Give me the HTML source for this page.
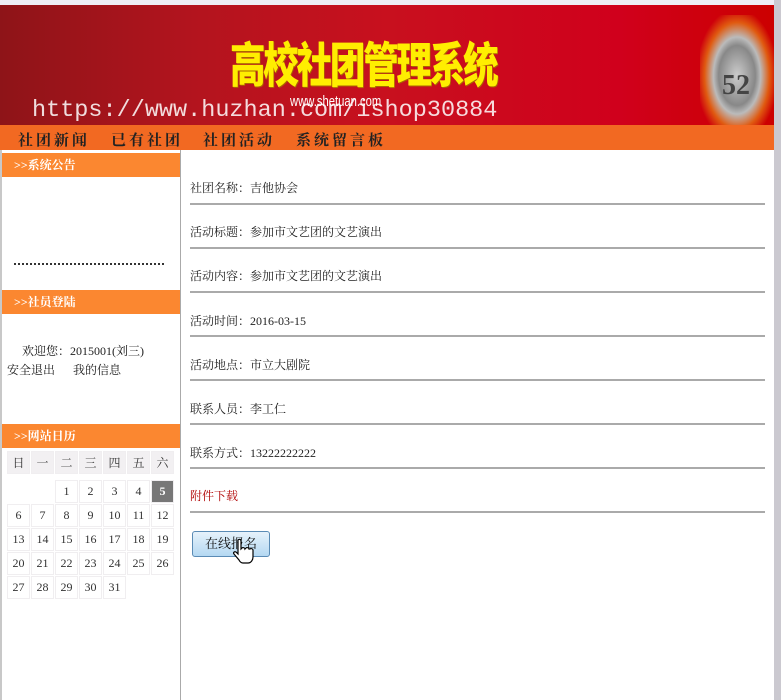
<!DOCTYPE html>
<html><head><meta charset="utf-8"><style>
*{margin:0;padding:0;box-sizing:border-box}
body{width:781px;height:700px;overflow:hidden;background:#fff;font-family:"Liberation Serif","Noto Serif CJK SC","Noto Sans CJK SC",serif;font-size:12px;color:#222;position:relative}
.abs{position:absolute}
.banner{left:0;top:5px;width:774px;height:120px;background:linear-gradient(90deg,#8e1418 0%,#b3141e 25%,#c8101e 50%,#d0001c 80%,#c00 100%)}
.title{left:230px;top:26px;font-family:"Noto Sans CJK SC",sans-serif;font-weight:900;font-size:48px;color:#ffee00;letter-spacing:-3px;transform:scaleX(0.74);transform-origin:left;text-shadow:1px 1px 0 #aa6600;white-space:nowrap}
.wm{left:32px;top:97px;font-family:"Liberation Mono",monospace;font-size:23.5px;color:#fff;opacity:.85;white-space:nowrap}
.nav{left:0;top:125px;width:774px;height:25px;background:#f26922}
.nav span{position:absolute;top:4px;font-family:"Noto Serif CJK SC",serif;font-weight:bold;font-size:15px;color:#222;letter-spacing:3px}
.rstrip{left:774px;top:0;width:7px;height:700px;background:#cbc9d0}
.lh{left:2px;width:178px;height:24px;background:#fb8730;color:#fff;font-weight:bold;font-size:12px;padding:3px 0 0 12px}
.cal td{width:23px;height:23px;text-align:center;font-size:12px;color:#333;border:1px solid #f0eef0}
.row{left:190px;width:575px;font-size:12px}
.line{left:190px;width:575px;height:2px;background:#aaa}
</style></head><body>
<div class="abs" style="left:0;top:0;width:781px;height:5px;background:#eeeef5"></div>
<div class="abs banner"></div>
<div class="abs" style="left:700px;top:15px;width:74px;height:110px;background:radial-gradient(ellipse at 50% 55%,#ccc 0%,#888 35%,#bbb 45%,#e05a10 62%,rgba(200,0,20,0) 78%)"></div>
<div class="abs" style="left:722px;top:70px;font-size:28px;font-weight:bold;color:#444">52</div>
<div class="abs title">高校社团管理系统</div>
<div class="abs" style="left:290px;top:93px;font-family:'Liberation Sans',sans-serif;font-size:15px;color:#fff;transform:scaleX(.75);transform-origin:left">www.shetuan.com</div>
<div class="abs wm">https://www.huzhan.com/ishop30884</div>
<div class="abs nav"><span style="left:18px">社团新闻</span><span style="left:111px">已有社团</span><span style="left:203px">社团活动</span><span style="left:296px">系统留言板</span></div>
<div class="abs rstrip"></div>
<div class="abs" style="left:0;top:150px;width:2px;height:550px;background:#c8c8c8"></div>
<div class="abs" style="left:180px;top:150px;width:1px;height:550px;background:#aaa"></div>
<div class="abs lh" style="top:153px">&gt;&gt;系统公告</div>
<div class="abs" style="left:14px;top:263px;width:150px;height:3px;border-top:2px dotted #333"></div>
<div class="abs lh" style="top:290px">&gt;&gt;社员登陆</div>
<div class="abs" style="left:22px;top:342px;font-size:12px">欢迎您：2015001(刘三)</div>
<div class="abs" style="left:7px;top:361px;font-size:12px">安全退出&nbsp;&nbsp;&nbsp;&nbsp;&nbsp;&nbsp;我的信息</div>
<div class="abs lh" style="top:424px">&gt;&gt;网站日历</div>
<table class="abs cal" style="left:6px;top:450px;border-collapse:separate;border-spacing:1px">
<tr style="background:#f2f0f2"><td>日</td><td>一</td><td>二</td><td>三</td><td>四</td><td>五</td><td>六</td></tr>
<tr><td style="border:0;height:4px" colspan="7"></td></tr>
<tr><td style="border:0"></td><td style="border:0"></td><td>1</td><td>2</td><td>3</td><td>4</td><td style="background:#777;color:#fff;font-weight:bold">5</td></tr>
<tr><td>6</td><td>7</td><td>8</td><td>9</td><td>10</td><td>11</td><td>12</td></tr>
<tr><td>13</td><td>14</td><td>15</td><td>16</td><td>17</td><td>18</td><td>19</td></tr>
<tr><td>20</td><td>21</td><td>22</td><td>23</td><td>24</td><td>25</td><td>26</td></tr>
<tr><td>27</td><td>28</td><td>29</td><td>30</td><td>31</td><td style="border:0"></td><td style="border:0"></td></tr>
</table>
<div class="abs row" style="top:179px">社团名称：吉他协会</div><div class="abs line" style="top:203px"></div>
<div class="abs row" style="top:223px">活动标题：参加市文艺团的文艺演出</div><div class="abs line" style="top:247px"></div>
<div class="abs row" style="top:267px">活动内容：参加市文艺团的文艺演出</div><div class="abs line" style="top:291px"></div>
<div class="abs row" style="top:312px">活动时间：2016-03-15</div><div class="abs line" style="top:335px"></div>
<div class="abs row" style="top:356px">活动地点：市立大剧院</div><div class="abs line" style="top:379px"></div>
<div class="abs row" style="top:400px">联系人员：李工仁</div><div class="abs line" style="top:423px"></div>
<div class="abs row" style="top:444px">联系方式：13222222222</div><div class="abs line" style="top:467px"></div>
<div class="abs row" style="top:487px;color:#b00000">附件下载</div><div class="abs line" style="top:511px"></div>
<div class="abs" style="left:192px;top:531px;width:78px;height:26px;border:1px solid #5a8bb5;border-radius:3px;background:linear-gradient(#e6f2fb,#b4d8f2);font-size:13px;text-align:center;line-height:24px;color:#111">在线报名</div>
<svg class="abs" style="left:232px;top:538px" width="22" height="26" viewBox="0 0 22 26"><path d="M6 2c1-1 3-1 3 1v8l1-1c1-1 3 0 3 1l1-1c1-1 3 0 3 1l1 0c1-1 3 0 3 1v7c0 3-2 6-5 6h-5c-2 0-3-1-4-3L2 16c-1-1 0-3 2-2l2 2z" fill="#fff" stroke="#000" stroke-width="1.2"/></svg>
</body></html>
